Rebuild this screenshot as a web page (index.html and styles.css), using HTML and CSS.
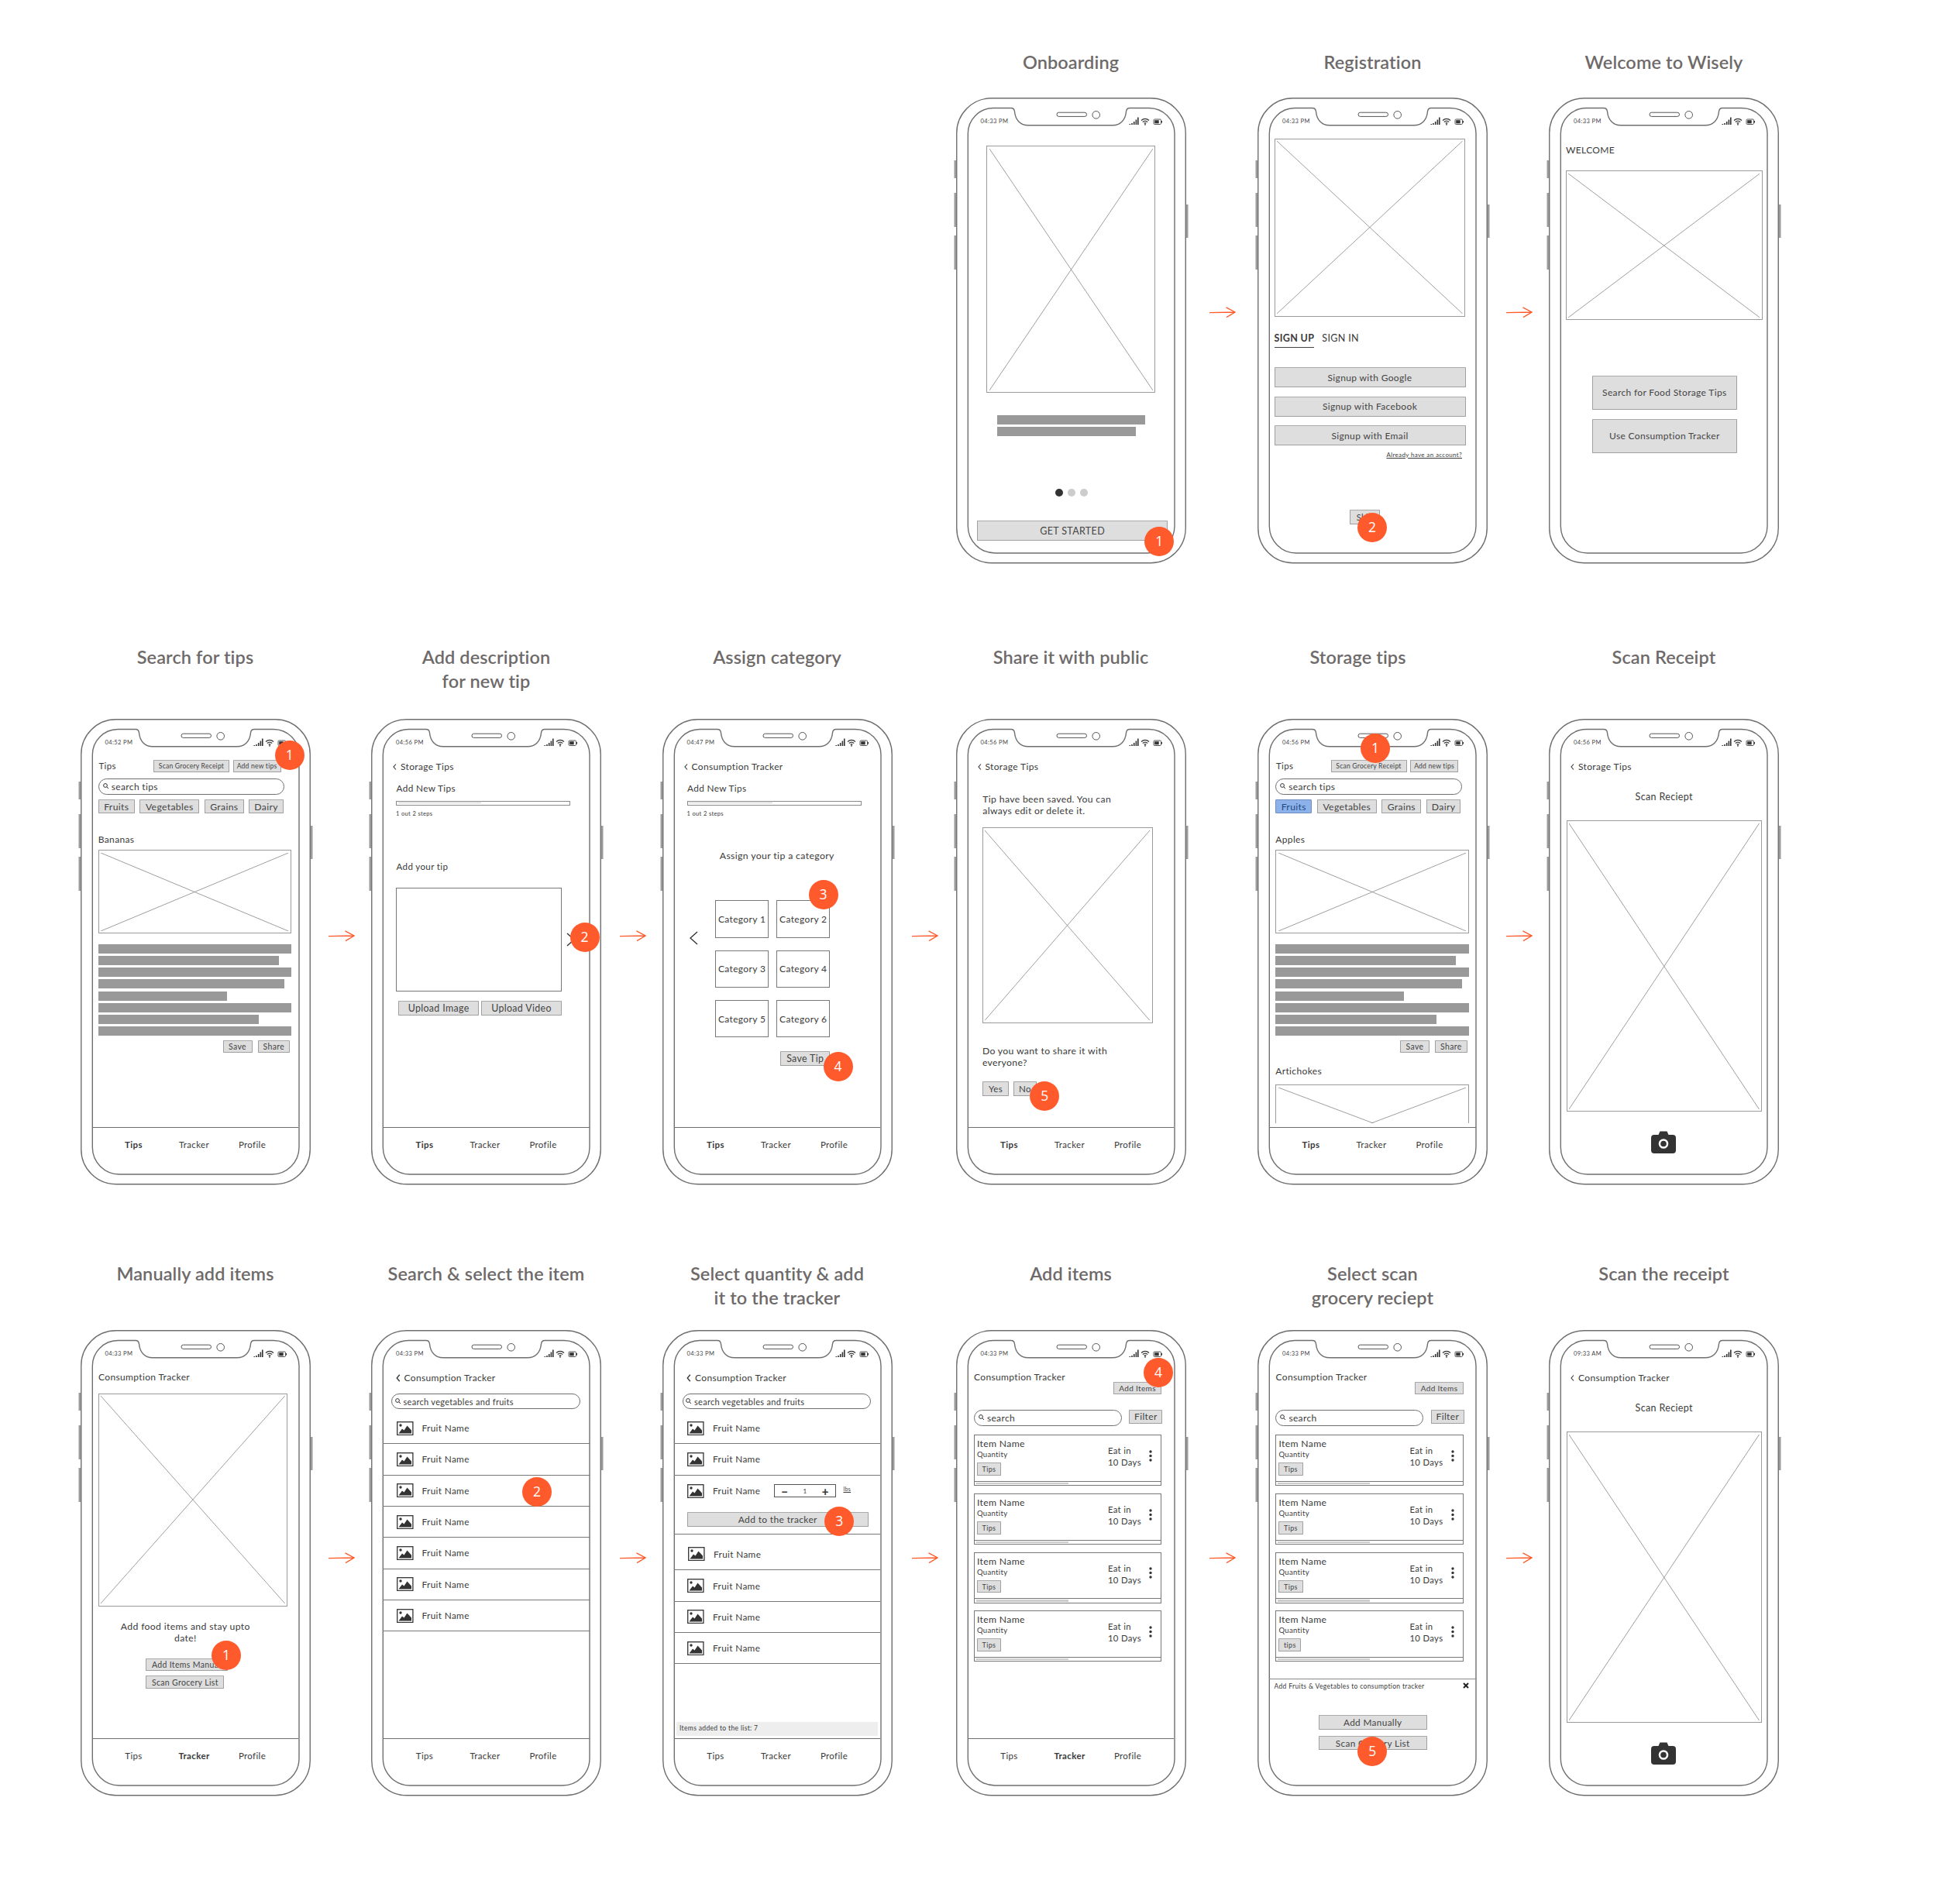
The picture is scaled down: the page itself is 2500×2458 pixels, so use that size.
FILE: index.html

```html
<!DOCTYPE html>
<html lang="en">
<head>
  <meta charset="UTF-8" />
  <title>Wisely user flows</title>
  <link rel="stylesheet" href="styles.css">
</head>
<body>

<svg class="defs" aria-hidden="true">
  <defs>
    <g id="frame">
      <rect class="side" x="-2.5" y="81" width="2.5" height="23"/>
      <rect class="side" x="-2.5" y="123" width="2.5" height="44"/>
      <rect class="side" x="-2.5" y="178" width="2.5" height="44"/>
      <rect class="side" x="297" y="138" width="2.5" height="43"/>
      <rect class="line" x="0.75" y="0.75" width="295.5" height="600" rx="45"/>
      <path class="line" d="M15.3 47 A33 33 0 0 1 48 13.5 H71 Q75 13.5 75.5 18 C76.5 29 83 35.7 93 35.7 H202 C212 35.7 218.5 29 219.5 18 Q220 13.5 224 13.5 H249 A33 33 0 0 1 282 47 V553 A35 35 0 0 1 247 588 H50 A35 35 0 0 1 15.3 553 Z"/>
      <rect class="thin" x="130" y="19.2" width="38.5" height="5.2" rx="2.6"/>
      <circle class="thin" cx="180.7" cy="22.3" r="4.8"/>
      <path class="ink" d="M223.5 34h1.6v1h-1.6zM226.2 33h1.6v2h-1.6zM228.9 31h1.6v4h-1.6zM231.6 28.5h1.6v6.500h-1.6zM234 25.500h1.600v9.500H234z"/>
      <path class="wifi" d="M239 29.500c3-2.700 7-2.700 10 0M240.800 31.500c2-1.700 4.400-1.700 6.400 0M242.700 33.300c.8-.7 1.800-.7 2.600 0"/>
      <circle class="ink" cx="244" cy="34.800" r=".9"/>
      <rect class="thin" x="255" y="28" width="9.500" height="6.500" rx="1.200"/>
      <rect class="ink" x="256.200" y="29.200" width="5.500" height="4.100"/>
      <rect class="ink" x="265" y="30" width="1" height="2.500"/>
    </g>
    <path id="cross" d="M0 0L100 100M100 0L0 100" vector-effect="non-scaling-stroke"/>
    <g id="lens">
      <circle cx="3" cy="3" r="2.400"/>
      <path d="M4.800 4.800L7 7"/>
    </g>
    <g id="picture">
      <rect x=".7" y=".7" width="20.200" height="16.800" fill="#fff" stroke="#333" stroke-width="1.300"/>
      <circle cx="5" cy="5" r="1.700" fill="#333"/>
      <path d="M2.500 15.500L7 9.500L9.500 11.500L13.500 5.500L19 11.500V15.500Z" fill="#333"/>
    </g>
    <g id="camera">
      <path d="M4 5h5.500l2-4.500h9l2 4.500H28a4 4 0 0 1 4 4v16a4 4 0 0 1-4 4H4a4 4 0 0 1-4-4V9a4 4 0 0 1 4-4z" fill="#333"/>
      <circle cx="16" cy="16.500" r="6.300" fill="#fff"/>
      <circle cx="16" cy="16.500" r="3.800" fill="#333"/>
    </g>
    <g id="more">
      <circle cx="2" cy="2" r="1.700"/>
      <circle cx="2" cy="7.500" r="1.700"/>
      <circle cx="2" cy="13" r="1.700"/>
    </g>
    <g id="arrow">
      <path d="M0 7.600L33 7M21.500 .8L33 7L22 13.600" fill="none" stroke="#ff5a2b" stroke-width="1.400"/>
    </g>
  </defs>
</svg>

<main class="board">

  <section class="flow flow-top">
    <article class="item col-4">
      <h2>Onboarding</h2>
      <div class="phone">
        <svg class="frame" viewBox="0 0 297 601.5"><use href="#frame"/></svg>
        <div class="screen s-onboard">
          <div class="status">04:33 PM</div>
          <div class="body">
            <div class="ph"><svg viewBox="0 0 100 100" preserveAspectRatio="none"><use href="#cross"/></svg></div>
            <div class="bar bar-a"></div>
            <div class="bar bar-b"></div>
            <div class="dots"><i class="on"></i><i></i><i></i></div>
            <div class="btn start">GET STARTED</div>
          </div>
          <span class="badge b-onboard">1</span>
        </div>
      </div>
    </article>

    <svg class="arrow" viewBox="0 0 34 14"><use href="#arrow"/></svg>

    <article class="item">
      <h2>Registration</h2>
      <div class="phone">
        <svg class="frame" viewBox="0 0 297 601.5"><use href="#frame"/></svg>
        <div class="screen s-register">
          <div class="status">04:33 PM</div>
          <div class="body">
            <div class="ph"><svg viewBox="0 0 100 100" preserveAspectRatio="none"><use href="#cross"/></svg></div>
            <div class="auth-tabs"><span class="on">SIGN UP</span><span>SIGN IN</span></div>
            <div class="btn signup first">Signup with Google</div>
            <div class="btn signup">Signup with Facebook</div>
            <div class="btn signup">Signup with Email</div>
            <div class="account">Already have an account?</div>
            <div class="btn skip">Skip</div>
          </div>
          <span class="badge b-register">2</span>
        </div>
      </div>
    </article>

    <svg class="arrow" viewBox="0 0 34 14"><use href="#arrow"/></svg>

    <article class="item">
      <h2>Welcome to Wisely</h2>
      <div class="phone">
        <svg class="frame" viewBox="0 0 297 601.5"><use href="#frame"/></svg>
        <div class="screen s-welcome">
          <div class="status">04:33 PM</div>
          <div class="body">
            <div class="welcome">WELCOME</div>
            <div class="ph"><svg viewBox="0 0 100 100" preserveAspectRatio="none"><use href="#cross"/></svg></div>
            <div class="btn big first">Search for Food Storage Tips</div>
            <div class="btn big">Use Consumption Tracker</div>
          </div>
        </div>
      </div>
    </article>
  </section>

  <section class="flow flow-mid">
    <article class="item">
      <h2>Search for tips</h2>
      <div class="phone">
        <svg class="frame" viewBox="0 0 297 601.5"><use href="#frame"/></svg>
        <div class="screen s-tips">
          <div class="status">04:52 PM</div>
          <div class="body">
            <div class="tips-bar"><span class="tips-name">Tips</span><span class="btn tiny scan">Scan Grocery Receipt</span><span class="btn tiny addnew">Add new tips</span></div>
            <div class="search"><svg class="lens" viewBox="0 0 8 8"><use href="#lens"/></svg>search tips</div>
            <div class="chips"><span class="btn">Fruits</span><span class="btn">Vegetables</span><span class="btn">Grains</span><span class="btn">Dairy</span></div>
            <div class="food">Bananas</div>
            <div class="ph"><svg viewBox="0 0 100 100" preserveAspectRatio="none"><use href="#cross"/></svg></div>
            <div class="copy"><i class="w1"></i><i class="w2"></i><i class="w1"></i><i class="w3"></i><i class="w4"></i><i class="w1"></i><i class="w5"></i><i class="w1"></i></div>
            <div class="actions"><span class="btn">Save</span><span class="btn">Share</span></div>
          </div>
          <div class="tabs"><b>Tips</b><span>Tracker</span><span>Profile</span></div>
          <span class="badge b-tips">1</span>
        </div>
      </div>
    </article>

    <svg class="arrow" viewBox="0 0 34 14"><use href="#arrow"/></svg>

    <article class="item">
      <h2>Add description<br>for new tip</h2>
      <div class="phone">
        <svg class="frame" viewBox="0 0 297 601.5"><use href="#frame"/></svg>
        <div class="screen s-newtip">
          <div class="status">04:56 PM</div>
          <div class="body">
            <div class="head"><svg class="chev" viewBox="0 0 5 8"><path d="M4 .5L1 4L4 7.500"/></svg>Storage Tips</div>
            <div class="new-title">Add New Tips</div>
            <div class="progress"><i></i></div>
            <div class="steps">1 out 2 steps</div>
            <div class="prompt">Add your tip</div>
            <div class="tip-row">
              <div class="tip-box"></div>
              <svg class="chev-big" viewBox="0 0 11 18"><path d="M1 1L10 9L1 17"/></svg>
            </div>
            <div class="uploads"><span class="btn">Upload Image</span><span class="btn">Upload Video</span></div>
          </div>
          <div class="tabs"><b>Tips</b><span>Tracker</span><span>Profile</span></div>
          <span class="badge b-newtip">2</span>
        </div>
      </div>
    </article>

    <svg class="arrow" viewBox="0 0 34 14"><use href="#arrow"/></svg>

    <article class="item">
      <h2>Assign category</h2>
      <div class="phone">
        <svg class="frame" viewBox="0 0 297 601.5"><use href="#frame"/></svg>
        <div class="screen s-assign">
          <div class="status">04:47 PM</div>
          <div class="body">
            <div class="head"><svg class="chev" viewBox="0 0 5 8"><path d="M4 .5L1 4L4 7.500"/></svg>Consumption Tracker</div>
            <div class="new-title">Add New Tips</div>
            <div class="progress"><i></i></div>
            <div class="steps">1 out 2 steps</div>
            <div class="assign-title">Assign your tip a category</div>
            <div class="cat-row">
              <svg class="chev-big" viewBox="0 0 11 18"><path d="M10 1L1 9L10 17"/></svg>
              <div class="cats">
                <div>Category 1</div><div>Category 2</div>
                <div>Category 3</div><div>Category 4</div>
                <div>Category 5</div><div>Category 6</div>
              </div>
            </div>
            <div class="btn save-tip">Save Tip</div>
          </div>
          <div class="tabs"><b>Tips</b><span>Tracker</span><span>Profile</span></div>
          <span class="badge b-assign3">3</span>
          <span class="badge b-assign4">4</span>
        </div>
      </div>
    </article>

    <svg class="arrow" viewBox="0 0 34 14"><use href="#arrow"/></svg>

    <article class="item">
      <h2>Share it with public</h2>
      <div class="phone">
        <svg class="frame" viewBox="0 0 297 601.5"><use href="#frame"/></svg>
        <div class="screen s-share">
          <div class="status">04:56 PM</div>
          <div class="body">
            <div class="head"><svg class="chev" viewBox="0 0 5 8"><path d="M4 .5L1 4L4 7.500"/></svg>Storage Tips</div>
            <p class="saved">Tip have been saved. You can<br>always edit or delete it.</p>
            <div class="ph"><svg viewBox="0 0 100 100" preserveAspectRatio="none"><use href="#cross"/></svg></div>
            <p class="ask">Do you want to share it with<br>everyone?</p>
            <div class="answers"><span class="btn">Yes</span><span class="btn">No</span></div>
          </div>
          <div class="tabs"><b>Tips</b><span>Tracker</span><span>Profile</span></div>
          <span class="badge b-share">5</span>
        </div>
      </div>
    </article>

    <div class="arrow-gap"></div>

    <article class="item">
      <h2 class="off-left">Storage tips</h2>
      <div class="phone">
        <svg class="frame" viewBox="0 0 297 601.5"><use href="#frame"/></svg>
        <div class="screen s-tips">
          <div class="status">04:56 PM</div>
          <div class="body">
            <div class="tips-bar"><span class="tips-name">Tips</span><span class="btn tiny scan">Scan Grocery Receipt</span><span class="btn tiny addnew">Add new tips</span></div>
            <div class="search"><svg class="lens" viewBox="0 0 8 8"><use href="#lens"/></svg>search tips</div>
            <div class="chips"><span class="btn picked">Fruits</span><span class="btn">Vegetables</span><span class="btn">Grains</span><span class="btn">Dairy</span></div>
            <div class="food">Apples</div>
            <div class="ph"><svg viewBox="0 0 100 100" preserveAspectRatio="none"><use href="#cross"/></svg></div>
            <div class="copy"><i class="w1"></i><i class="w2"></i><i class="w1"></i><i class="w3"></i><i class="w4"></i><i class="w1"></i><i class="w5"></i><i class="w1"></i></div>
            <div class="actions"><span class="btn">Save</span><span class="btn">Share</span></div>
            <div class="food next">Artichokes</div>
            <div class="ph-cut"><svg viewBox="0 0 100 100" preserveAspectRatio="none"><use href="#cross"/></svg></div>
          </div>
          <div class="tabs"><b>Tips</b><span>Tracker</span><span>Profile</span></div>
          <span class="badge b-storage">1</span>
        </div>
      </div>
    </article>

    <svg class="arrow" viewBox="0 0 34 14"><use href="#arrow"/></svg>

    <article class="item">
      <h2>Scan Receipt</h2>
      <div class="phone">
        <svg class="frame" viewBox="0 0 297 601.5"><use href="#frame"/></svg>
        <div class="screen s-scan">
          <div class="status">04:56 PM</div>
          <div class="body">
            <div class="head"><svg class="chev" viewBox="0 0 5 8"><path d="M4 .5L1 4L4 7.500"/></svg>Storage Tips</div>
            <div class="scan-title">Scan Reciept</div>
            <div class="ph"><svg viewBox="0 0 100 100" preserveAspectRatio="none"><use href="#cross"/></svg></div>
            <svg class="camera" viewBox="0 0 32 29"><use href="#camera"/></svg>
          </div>
        </div>
      </div>
    </article>
  </section>

  <section class="flow flow-low">
    <article class="item">
      <h2>Manually add items</h2>
      <div class="phone">
        <svg class="frame" viewBox="0 0 297 601.5"><use href="#frame"/></svg>
        <div class="screen s-manual">
          <div class="status">04:33 PM</div>
          <div class="body">
            <div class="page-title">Consumption Tracker</div>
            <div class="ph"><svg viewBox="0 0 100 100" preserveAspectRatio="none"><use href="#cross"/></svg></div>
            <p class="intro">Add food items and stay upto<br>date!</p>
            <div class="btn manual-a">Add Items Manually</div>
            <div class="btn manual-b">Scan Grocery List</div>
          </div>
          <div class="tabs"><span>Tips</span><b>Tracker</b><span>Profile</span></div>
          <span class="badge b-manual">1</span>
        </div>
      </div>
    </article>

    <svg class="arrow" viewBox="0 0 34 14"><use href="#arrow"/></svg>

    <article class="item">
      <h2>Search &amp; select the item</h2>
      <div class="phone">
        <svg class="frame" viewBox="0 0 297 601.5"><use href="#frame"/></svg>
        <div class="screen s-list">
          <div class="status">04:33 PM</div>
          <div class="body">
            <div class="head"><svg class="chev" viewBox="0 0 5 8"><path d="M4 .5L1 4L4 7.500"/></svg>Consumption Tracker</div>
            <div class="search"><svg class="lens" viewBox="0 0 8 8"><use href="#lens"/></svg>search vegetables and fruits</div>
            <ul class="fruits">
              <li><svg viewBox="0 0 22 18"><use href="#picture"/></svg>Fruit Name</li>
              <li><svg viewBox="0 0 22 18"><use href="#picture"/></svg>Fruit Name</li>
              <li><svg viewBox="0 0 22 18"><use href="#picture"/></svg>Fruit Name</li>
              <li><svg viewBox="0 0 22 18"><use href="#picture"/></svg>Fruit Name</li>
              <li><svg viewBox="0 0 22 18"><use href="#picture"/></svg>Fruit Name</li>
              <li><svg viewBox="0 0 22 18"><use href="#picture"/></svg>Fruit Name</li>
              <li><svg viewBox="0 0 22 18"><use href="#picture"/></svg>Fruit Name</li>
            </ul>
          </div>
          <div class="tabs"><span>Tips</span><span>Tracker</span><span>Profile</span></div>
          <span class="badge b-list">2</span>
        </div>
      </div>
    </article>

    <svg class="arrow" viewBox="0 0 34 14"><use href="#arrow"/></svg>

    <article class="item">
      <h2>Select quantity &amp; add<br>it to the tracker</h2>
      <div class="phone">
        <svg class="frame" viewBox="0 0 297 601.5"><use href="#frame"/></svg>
        <div class="screen s-list s-qty">
          <div class="status">04:33 PM</div>
          <div class="body">
            <div class="head"><svg class="chev" viewBox="0 0 5 8"><path d="M4 .5L1 4L4 7.500"/></svg>Consumption Tracker</div>
            <div class="search"><svg class="lens" viewBox="0 0 8 8"><use href="#lens"/></svg>search vegetables and fruits</div>
            <ul class="fruits">
              <li><svg viewBox="0 0 22 18"><use href="#picture"/></svg>Fruit Name</li>
              <li><svg viewBox="0 0 22 18"><use href="#picture"/></svg>Fruit Name</li>
              <li class="open">
                <div class="open-main">
                  <svg viewBox="0 0 22 18"><use href="#picture"/></svg>
                  <span class="open-name">Fruit Name</span>
                  <span class="stepper"><b>&minus;</b><span>1</span><b>+</b></span>
                  <span class="lbs">lbs</span>
                </div>
                <div class="btn add-tracker">Add to the tracker</div>
              </li>
              <li class="after-open"><svg viewBox="0 0 22 18"><use href="#picture"/></svg>Fruit Name</li>
              <li><svg viewBox="0 0 22 18"><use href="#picture"/></svg>Fruit Name</li>
              <li><svg viewBox="0 0 22 18"><use href="#picture"/></svg>Fruit Name</li>
              <li><svg viewBox="0 0 22 18"><use href="#picture"/></svg>Fruit Name</li>
            </ul>
            <div class="added">Items added to the list: 7</div>
          </div>
          <div class="tabs"><span>Tips</span><span>Tracker</span><span>Profile</span></div>
          <span class="badge b-qty">3</span>
        </div>
      </div>
    </article>

    <svg class="arrow" viewBox="0 0 34 14"><use href="#arrow"/></svg>

    <article class="item">
      <h2>Add items</h2>
      <div class="phone">
        <svg class="frame" viewBox="0 0 297 601.5"><use href="#frame"/></svg>
        <div class="screen s-tracker">
          <div class="status">04:33 PM</div>
          <div class="body">
            <div class="page-title">Consumption Tracker</div>
            <div class="btn add-items">Add Items</div>
            <div class="find"><div class="search"><svg class="lens" viewBox="0 0 8 8"><use href="#lens"/></svg>search</div><span class="btn">Filter</span></div>
            <div class="cards">
              <div class="card"><div class="card-main"><div class="card-info"><div class="card-name">Item Name</div><div class="card-qty">Quantity</div><span class="btn">Tips</span></div><div class="card-eat">Eat in<br>10 Days</div><svg class="more" viewBox="0 0 4 15"><use href="#more"/></svg></div><i></i></div>
              <div class="card"><div class="card-main"><div class="card-info"><div class="card-name">Item Name</div><div class="card-qty">Quantity</div><span class="btn">Tips</span></div><div class="card-eat">Eat in<br>10 Days</div><svg class="more" viewBox="0 0 4 15"><use href="#more"/></svg></div><i></i></div>
              <div class="card"><div class="card-main"><div class="card-info"><div class="card-name">Item Name</div><div class="card-qty">Quantity</div><span class="btn">Tips</span></div><div class="card-eat">Eat in<br>10 Days</div><svg class="more" viewBox="0 0 4 15"><use href="#more"/></svg></div><i></i></div>
              <div class="card"><div class="card-main"><div class="card-info"><div class="card-name">Item Name</div><div class="card-qty">Quantity</div><span class="btn">Tips</span></div><div class="card-eat">Eat in<br>10 Days</div><svg class="more" viewBox="0 0 4 15"><use href="#more"/></svg></div><i></i></div>
            </div>
          </div>
          <div class="tabs"><span>Tips</span><b>Tracker</b><span>Profile</span></div>
          <span class="badge b-tracker">4</span>
        </div>
      </div>
    </article>

    <svg class="arrow" viewBox="0 0 34 14"><use href="#arrow"/></svg>

    <article class="item">
      <h2>Select scan<br>grocery reciept</h2>
      <div class="phone">
        <svg class="frame" viewBox="0 0 297 601.5"><use href="#frame"/></svg>
        <div class="screen s-tracker">
          <div class="status">04:33 PM</div>
          <div class="body">
            <div class="page-title">Consumption Tracker</div>
            <div class="btn add-items">Add Items</div>
            <div class="find"><div class="search"><svg class="lens" viewBox="0 0 8 8"><use href="#lens"/></svg>search</div><span class="btn">Filter</span></div>
            <div class="cards">
              <div class="card"><div class="card-main"><div class="card-info"><div class="card-name">Item Name</div><div class="card-qty">Quantity</div><span class="btn">Tips</span></div><div class="card-eat">Eat in<br>10 Days</div><svg class="more" viewBox="0 0 4 15"><use href="#more"/></svg></div><i></i></div>
              <div class="card"><div class="card-main"><div class="card-info"><div class="card-name">Item Name</div><div class="card-qty">Quantity</div><span class="btn">Tips</span></div><div class="card-eat">Eat in<br>10 Days</div><svg class="more" viewBox="0 0 4 15"><use href="#more"/></svg></div><i></i></div>
              <div class="card"><div class="card-main"><div class="card-info"><div class="card-name">Item Name</div><div class="card-qty">Quantity</div><span class="btn">Tips</span></div><div class="card-eat">Eat in<br>10 Days</div><svg class="more" viewBox="0 0 4 15"><use href="#more"/></svg></div><i></i></div>
              <div class="card"><div class="card-main"><div class="card-info"><div class="card-name">Item Name</div><div class="card-qty">Quantity</div><span class="btn narrow">tips</span></div><div class="card-eat">Eat in<br>10 Days</div><svg class="more" viewBox="0 0 4 15"><use href="#more"/></svg></div><i></i></div>
            </div>
            <div class="sheet">
              <div class="sheet-top"><span>Add Fruits &amp; Vegetables to consumption tracker</span><svg viewBox="0 0 8 8"><path d="M1 1L7 7M7 1L1 7"/></svg></div>
              <div class="btn sheet-a">Add Manually</div>
              <div class="btn sheet-b">Scan Grocery List</div>
            </div>
          </div>
          <span class="badge b-sheet">5</span>
        </div>
      </div>
    </article>

    <svg class="arrow" viewBox="0 0 34 14"><use href="#arrow"/></svg>

    <article class="item">
      <h2>Scan the receipt</h2>
      <div class="phone">
        <svg class="frame" viewBox="0 0 297 601.5"><use href="#frame"/></svg>
        <div class="screen s-scan">
          <div class="status">09:33 AM</div>
          <div class="body">
            <div class="head"><svg class="chev" viewBox="0 0 5 8"><path d="M4 .5L1 4L4 7.500"/></svg>Consumption Tracker</div>
            <div class="scan-title">Scan Reciept</div>
            <div class="ph"><svg viewBox="0 0 100 100" preserveAspectRatio="none"><use href="#cross"/></svg></div>
            <svg class="camera" viewBox="0 0 32 29"><use href="#camera"/></svg>
          </div>
        </div>
      </div>
    </article>
  </section>

</main>

</body>
</html>
```

FILE: styles.css

```css
* {
  box-sizing: border-box;
}
html, body {
  margin: 0;
  background: #fff;
}
body {
  font-family: "Lato", "Open Sans", sans-serif;
  color: #3a3a3a;
  font-size: 12px;
  letter-spacing: .35px;
}
p {
  margin: 0;
}
.defs {
  position: absolute;
  width: 0;
  height: 0;
}

/* board: phones and arrows on one column grid */
.board {
  width: 2500px;
  height: 2458px;
  padding: 65px 0 0 103.5px;
}
.flow {
  display: grid;
  grid-template-columns: 297px 78.5px 297px 78.5px 297px 82px 297px 92.5px 297px 79px 297px;
}
.flow-mid {
  margin-top: 105.5px;
}
.flow-low {
  margin-top: 99.5px;
}
.col-4 {
  grid-column: 7;
}
.item h2 {
  margin: 0;
  font-size: 23.5px;
  line-height: 30.5px;
  font-weight: 600;
  letter-spacing: .1px;
  color: #6e6a6a;
  text-align: center;
}
.flow-top h2 {
  height: 61px;
}
.flow-mid h2 {
  height: 95px;
}
.flow-low h2 {
  height: 88px;
}
.item h2.off-left {
  padding-right: 38px;
}
.arrow {
  display: block;
  width: 34px;
  height: 14px;
  justify-self: center;
  margin-left: 3px;
}
.flow-top .arrow {
  margin-top: 330.5px;
}
.flow-mid .arrow {
  margin-top: 368px;
}
.flow-low .arrow {
  margin-top: 375px;
}

/* phone shell */
.phone {
  position: relative;
  width: 297px;
  height: 601.5px;
  padding: 13.5px 0 0 15px;
}
.frame {
  position: absolute;
  left: 0;
  top: 0;
  width: 297px;
  height: 601.5px;
  overflow: visible;
}
#frame .line {
  fill: none;
  stroke: #6f6f6f;
  stroke-width: 1.4;
}
#frame .thin {
  fill: none;
  stroke: #555;
  stroke-width: 1;
}
#frame .side {
  fill: #9c9c9c;
}
#frame .ink {
  fill: #333;
}
#frame .wifi {
  fill: none;
  stroke: #333;
  stroke-width: 1.3;
}
.screen {
  position: relative;
  display: flex;
  flex-direction: column;
  width: 266.5px;
  height: 574.5px;
}
.status {
  flex: none;
  height: 33px;
  padding-left: 17px;
  font-size: 7.5px;
  line-height: 33px;
  letter-spacing: .4px;
  color: #444;
}
.body {
  flex: 1;
  display: flow-root;
  min-height: 0;
}
.tabs {
  flex: none;
  height: 61.5px;
  display: flex;
  padding-left: 16px;
  border-top: 1px solid #6f6f6f;
  font-size: 11.5px;
  line-height: 44px;
  text-align: center;
}
.tabs > :nth-child(1) {
  width: 76px;
}
.tabs > :nth-child(2) {
  width: 80px;
}
.tabs > :nth-child(3) {
  width: 70px;
}
.tabs b {
  font-weight: 700;
}
.badge {
  position: absolute;
  width: 38px;
  height: 38px;
  border-radius: 50%;
  background: #ff5a2b;
  color: #fff;
  font-family: "Open Sans", sans-serif;
  font-size: 17.5px;
  line-height: 37px;
  text-align: center;
  letter-spacing: 0;
}

/* shared wireframe pieces */
.ph {
  border: 1px solid #9a9a9a;
  padding: 2.5px;
}
.ph svg, .ph-cut svg {
  display: block;
  width: 100%;
  height: 100%;
  fill: none;
  stroke: #858585;
  stroke-width: .8;
}
.btn {
  display: flex;
  align-items: center;
  justify-content: center;
  background: #dedede;
  border: 1px solid #a0a0a0;
  border-top-color: #aaa;
  border-radius: 1px;
  color: #444;
  white-space: nowrap;
}
.bar {
  height: 12px;
  background: #999;
}
.search {
  display: flex;
  align-items: center;
  border: 1px solid #6f6f6f;
  border-radius: 11px;
  padding-left: 5px;
}
.lens {
  width: 8px;
  height: 8px;
  margin-right: 3px;
  fill: none;
  stroke: #333;
  stroke-width: 1;
}
.head {
  display: flex;
  align-items: center;
  margin-top: 7px;
  height: 16px;
  padding-left: 13px;
  font-size: 12px;
}
.chev {
  width: 5px;
  height: 8px;
  margin-right: 5px;
  fill: none;
  stroke: #333;
  stroke-width: 1.1;
}
.chev-big {
  flex: none;
  width: 11px;
  height: 18px;
  fill: none;
  stroke: #333;
  stroke-width: 1.4;
}
.page-title {
  margin: 7px 0 0 8.5px;
  font-size: 12px;
  line-height: 14px;
}
.new-title {
  margin: 13.8px 0 0 17.5px;
  font-size: 11.8px;
  line-height: 14px;
}
.progress {
  margin: 8.4px 0 0 17px;
  width: 225.4px;
  height: 6px;
  padding: 1.5px;
  border: 1px solid #8a8a8a;
}
.progress i {
  display: block;
  width: 49%;
  height: 100%;
  background: #ccc;
}
.steps {
  margin: 6.8px 0 0 17px;
  font-size: 7.5px;
  line-height: 10px;
}

/* onboarding */
.s-onboard .ph {
  margin: 15.8px 0 0 24.7px;
  width: 218px;
  height: 319px;
}
.bar-a {
  margin: 28.4px 0 0 38.3px;
  width: 191.7px;
}
.bar-b {
  margin: 3px 0 0 38.3px;
  width: 179.3px;
}
.dots {
  display: flex;
  gap: 6px;
  margin: 68.6px 0 0 113px;
}
.dots i {
  width: 10px;
  height: 10px;
  border-radius: 50%;
  background: #ccc;
}
.dots .on {
  background: #333;
}
.start {
  margin: 31px 0 0 12.6px;
  width: 246px;
  height: 26px;
  font-size: 12.5px;
}

/* registration */
.s-register .ph {
  margin: 6.2px 0 0 6.5px;
  width: 246.7px;
  height: 230px;
}
.auth-tabs {
  display: flex;
  gap: 10px;
  margin: 20.8px 0 0 6.5px;
  height: 20px;
  font-size: 12.5px;
  line-height: 16px;
}
.auth-tabs .on {
  font-weight: 700;
  border-bottom: 1px solid #444;
}
.signup {
  margin: 11.4px 0 0 6.5px;
  width: 247px;
  height: 26px;
  font-size: 12px;
}
.signup.first {
  margin-top: 24.8px;
}
.account {
  margin-top: 6.6px;
  padding-right: 17.5px;
  font-size: 8px;
  line-height: 10px;
  text-align: right;
  text-decoration: underline;
}
.skip {
  margin: 66.2px 0 0 104px;
  width: 39px;
  height: 19px;
  font-size: 11px;
}

/* welcome */
.welcome {
  margin: 14.8px 0 0 7px;
  font-size: 12px;
  line-height: 14px;
}
.s-welcome .ph {
  margin: 19.2px 0 0 6.7px;
  width: 254.3px;
  height: 193px;
}
.big {
  margin: 12px 0 0 41px;
  width: 186.7px;
  height: 44px;
  font-size: 12px;
}
.big.first {
  margin-top: 71.4px;
}

/* tips list */
.tips-bar {
  display: flex;
  align-items: center;
  margin: 6px 0 0 9px;
  height: 16px;
  gap: 4.5px;
}
.tips-name {
  width: 66px;
  font-size: 11.5px;
}
.tiny {
  height: 16px;
  font-size: 8.6px;
  letter-spacing: .2px;
}
.scan {
  width: 98px;
}
.addnew {
  width: 62px;
}
.s-tips .search {
  margin: 8px 0 0 8.3px;
  width: 240.6px;
  height: 21px;
  font-size: 12px;
}
.chips {
  display: flex;
  gap: 6.5px;
  margin: 6.3px 0 0 8.3px;
  height: 18.6px;
  font-size: 12.2px;
}
.chips .btn:nth-child(1) { width: 47px; }
.chips .btn:nth-child(2) { width: 77px; }
.chips .btn:nth-child(3) { width: 51px; }
.chips .btn:nth-child(4) { width: 44.5px; }
.chips .picked {
  background: #8db2ea;
  border-color: #6f8fc0;
  color: #244a86;
}
.food {
  margin: 26.6px 0 0 8.3px;
  font-size: 12px;
  line-height: 14px;
}
.food.next {
  margin-top: 16.7px;
}
.s-tips .ph {
  margin: 6.500px 0 0 8.3px;
  width: 249.3px;
  height: 108px;
}
.copy {
  display: flex;
  flex-direction: column;
  gap: 3.15px;
  margin: 13.5px 0 0 8.3px;
}
.copy i {
  height: 12px;
  background: #999;
}
.w1 { width: 249.3px; }
.w2 { width: 232.8px; }
.w3 { width: 240.6px; }
.w4 { width: 166.2px; }
.w5 { width: 207.5px; }
.actions {
  display: flex;
  gap: 7px;
  margin: 5.7px 0 0 169px;
  height: 16.8px;
  font-size: 10.5px;
}
.actions .btn:first-child { width: 38px; }
.actions .btn:last-child { width: 41.8px; }
.ph-cut {
  margin: 10.2px 0 0 8.3px;
  width: 249.3px;
  height: 50px;
  padding: 2.5px 2.5px 0;
  overflow: hidden;
  border: 1px solid #9a9a9a;
  border-bottom: 0;
}
.ph-cut svg {
  height: 91px;
}

/* add tip */
.prompt {
  margin: 55.4px 0 0 17.5px;
  font-size: 11.6px;
  line-height: 14px;
}
.tip-row {
  display: flex;
  align-items: center;
  gap: 5.5px;
  margin: 20px 0 0 17px;
}
.tip-box {
  width: 214.4px;
  height: 134.5px;
  border: 1px solid #777;
}
.uploads {
  display: flex;
  gap: 2.3px;
  margin: 11.6px 0 0 19.8px;
  height: 18.6px;
  font-size: 12.4px;
}
.uploads .btn {
  width: 104.6px;
}

/* assign category */
.assign-title {
  margin-top: 41.4px;
  font-size: 12.3px;
  line-height: 14px;
  text-align: center;
}
.cat-row {
  display: flex;
  gap: 22.6px;
  margin: 50.3px 0 0 20px;
}
.cat-row .chev-big {
  margin-top: 39.500px;
}
.cats {
  display: grid;
  grid-template-columns: 69px 69.3px;
  grid-auto-rows: 48.4px;
  gap: 16px 10px;
  font-size: 12px;
}
.cats div {
  display: flex;
  align-items: center;
  justify-content: center;
  border: 1px solid #777;
  white-space: nowrap;
}
.save-tip {
  margin: 17.8px 0 0 137.6px;
  width: 64.3px;
  height: 18.6px;
  font-size: 12.4px;
}

/* share */
.saved, .ask {
  margin: 26.8px 0 0 19.8px;
  font-size: 12.2px;
  line-height: 15px;
}
.s-share .ph {
  margin: 14.2px 0 0 19.4px;
  width: 220px;
  height: 252.4px;
}
.ask {
  margin: 28.4px 0 0 19.4px;
}
.answers {
  display: flex;
  gap: 6px;
  margin: 17px 0 0 19.4px;
  height: 18.6px;
  font-size: 11.5px;
}
.answers .btn:first-child { width: 34.4px; }
.answers .btn:last-child { width: 29.4px; }

/* scan */
.scan-title {
  margin: 24.5px 0 0 1px;
  font-size: 12.5px;
  line-height: 14px;
  text-align: center;
}
.s-scan .ph {
  margin: 23.3px 0 0 7.5px;
  width: 252.5px;
  height: 376px;
}
.camera {
  display: block;
  width: 32px;
  height: 29px;
  margin: 24.7px 0 0 117.3px;
}

/* manual add */
.s-manual .ph {
  margin: 14px 0 0 8.3px;
  width: 244.7px;
  height: 275px;
}
.intro {
  margin-top: 18.3px;
  width: 241.6px;
  font-size: 12.2px;
  line-height: 15px;
  text-align: center;
}
.manual-a, .manual-b {
  margin: 19.4px 0 0 69.4px;
  width: 106.5px;
  height: 16.3px;
  font-size: 10.5px;
  justify-content: flex-start;
  padding-left: 7px;
}
.manual-b {
  margin-top: 6px;
  width: 101px;
}

/* fruit list */
.s-list .head {
  padding-left: 16.5px;
}
.s-list .chev {
  width: 6px;
  height: 10px;
}
.s-list .search {
  margin: 12.5px 0 0 11px;
  width: 243.8px;
  height: 20px;
  font-size: 11px;
  letter-spacing: .3px;
  padding-left: 3.500px;
}
.fruits {
  list-style: none;
  margin: 4.9px 0 0;
  padding: 0;
  font-size: 11.8px;
}
.fruits li {
  display: flex;
  align-items: center;
  height: 40.35px;
  padding-left: 17.5px;
  border-bottom: 1px solid #777;
}
.fruits svg {
  width: 22px;
  height: 18px;
  margin-right: 11px;
}
.fruits .open {
  display: block;
  height: 76.4px;
  padding-left: 0;
}
.fruits .after-open {
  height: 46.4px;
  padding: 5px 0 0 18.5px;
}
.open-main {
  display: flex;
  align-items: center;
  height: 40px;
  padding-left: 17.5px;
}
.open-name {
  width: 79.3px;
}
.stepper {
  display: flex;
  align-items: center;
  justify-content: space-between;
  width: 79.500px;
  height: 17.7px;
  padding: 0 8px;
  border: 1px solid #555;
  font-size: 8px;
}
.stepper b {
  font-size: 15px;
  font-weight: 900;
  line-height: 14px;
}
.lbs {
  margin: -5px 0 0 9.7px;
  font-size: 7px;
  text-decoration: underline;
}
.add-tracker {
  margin: 7.5px 0 0 17.3px;
  width: 234px;
  height: 18.6px;
  font-size: 12px;
}
.added {
  margin: 75.1px 0 0 3px;
  width: 260px;
  height: 17.7px;
  padding-left: 4.500px;
  background: #eee;
  font-size: 8.5px;
  line-height: 17.7px;
}

/* tracker cards */
.add-items {
  margin: -.4px 0 0 188.3px;
  width: 62.5px;
  height: 16.3px;
  font-size: 10px;
}
.find {
  display: flex;
  gap: 9.6px;
  margin: 19.1px 0 0 8.4px;
  font-size: 12px;
}
.find .search {
  width: 191px;
  height: 21.4px;
}
.find .btn {
  width: 42.7px;
  height: 18.6px;
}
.cards {
  display: flex;
  flex-direction: column;
  gap: 9.6px;
  margin: 11.6px 0 0 8.4px;
  width: 242.4px;
}
.card {
  height: 66px;
  border: 1px solid #777;
}
.card-main {
  display: flex;
  height: 59.5px;
  border-bottom: 1px solid #777;
}
.card > i {
  display: block;
  width: 119px;
  height: 2.5px;
  margin: 1px 0 0 2px;
  background: #ccc;
}
.card-info {
  width: 172px;
  padding: 4px 0 0 3px;
}
.card-name {
  font-size: 12.2px;
  line-height: 14px;
}
.card-qty {
  margin-top: 2px;
  font-size: 9.5px;
  line-height: 10px;
}
.card-info .btn {
  margin-top: 5px;
  width: 31.2px;
  height: 16.8px;
  font-size: 9px;
}
.card-info .narrow {
  width: 29px;
}
.card-eat {
  width: 52px;
  padding-top: 12px;
  font-size: 11.3px;
  line-height: 15px;
  white-space: nowrap;
}
.more {
  width: 4px;
  height: 15px;
  margin: 18.5px 0 0 1.500px;
  fill: #333;
}
.sheet {
  margin-top: 21.5px;
  border-top: 1.5px solid #8a8a8a;
}
.sheet-top {
  display: flex;
  justify-content: space-between;
  padding: 4.500px 9px 0 6.500px;
  font-size: 8.5px;
  line-height: 11px;
}
.sheet-top svg {
  width: 8px;
  height: 8px;
  fill: none;
  stroke: #222;
  stroke-width: 2;
}
.sheet-a, .sheet-b {
  margin: 30.8px 0 0 63.5px;
  width: 140.5px;
  height: 18.6px;
  font-size: 11.8px;
}
.sheet-b {
  margin-top: 8.4px;
  height: 18px;
}

/* step badges, placed over the screen they point at */
.b-onboard { left: 228.7px; top: 540.8px; }
.b-register { left: 114px; top: 522px; }
.b-tips { left: 236.3px; top: 14px; }
.b-newtip { left: 241.5px; top: 249px; }
.b-assign3 { left: 174px; top: 194.2px; }
.b-assign4 { left: 193px; top: 416.3px; }
.b-share { left: 80.7px; top: 454px; }
.b-storage { left: 118px; top: 5.2px; }
.b-manual { left: 154.6px; top: 387.5px; }
.b-list { left: 179.9px; top: 176.5px; }
.b-qty { left: 194.8px; top: 214.3px; }
.b-tracker { left: 227.6px; top: 22px; }
.b-sheet { left: 114.3px; top: 511.3px; }
```
